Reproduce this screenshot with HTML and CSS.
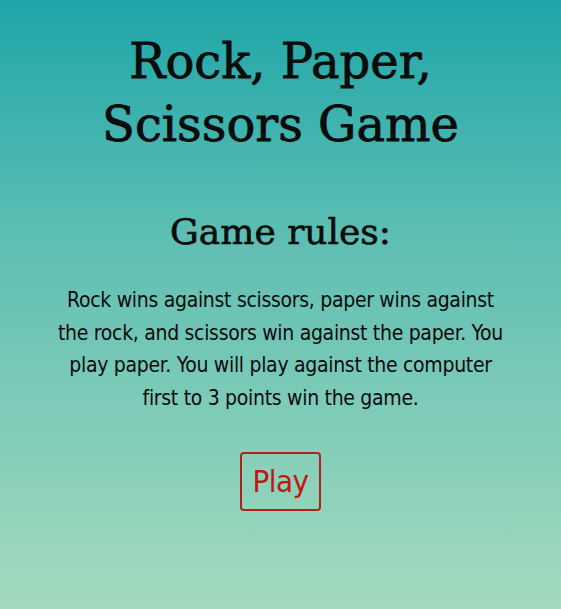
FILE: index.html
```html
<!DOCTYPE html>
<html lang="en">
<head>
<meta charset="utf-8">
<title>Rock, Paper, Scissors Game</title>
<link rel="stylesheet" href="styles.css">
</head>
<body>
<main class="page">
  <h1 class="title">Rock, Paper,<br>Scissors Game</h1>
  <h2 class="subtitle">Game rules:</h2>
  <p class="rules">Rock wins against scissors, paper wins against<br>the rock, and scissors win against the paper. You<br>play paper. You will play against the computer<br>first to 3 points win the game.</p>
  <button class="play" type="button">Play</button>
</main>
</body>
</html>
```

FILE: styles.css
```css
html, body {
  margin: 0;
  padding: 0;
  height: 100%;
}
body {
  background: linear-gradient(to bottom, #1ea6a9 0%, #5fbfb3 40%, #a4dabe 100%);
  color: #0b0b0b;
}
.page {
  display: flex;
  flex-direction: column;
  align-items: center;
  padding-top: 30px;
  text-align: center;
}
.title {
  font-family: "DejaVu Serif", serif;
  font-weight: normal;
  font-size: 48px;
  line-height: 63px;
  margin: 0;
  -webkit-text-stroke: 0.8px #0b0b0b;
}
.subtitle {
  font-family: "DejaVu Serif", serif;
  font-weight: normal;
  font-size: 36px;
  line-height: 46px;
  margin: 53px 0 0;
  -webkit-text-stroke: 0.6px #0b0b0b;
}
.rules {
  font-family: "DejaVu Sans", sans-serif;
  font-stretch: condensed;
  font-size: 21px;
  letter-spacing: -0.3px;
  line-height: 32.5px;
  width: 540px;
  margin: 29px 0 0;
}
.play {
  font-family: "DejaVu Sans", sans-serif;
  font-stretch: condensed;
  font-size: 31px;
  line-height: 36px;
  letter-spacing: -0.6px;
  color: #c0170f;
  background: transparent;
  border: 2px solid #b3201c;
  border-radius: 4px;
  padding: 9px 11px 10px;
  margin-top: 38px;
  cursor: pointer;
}
```
